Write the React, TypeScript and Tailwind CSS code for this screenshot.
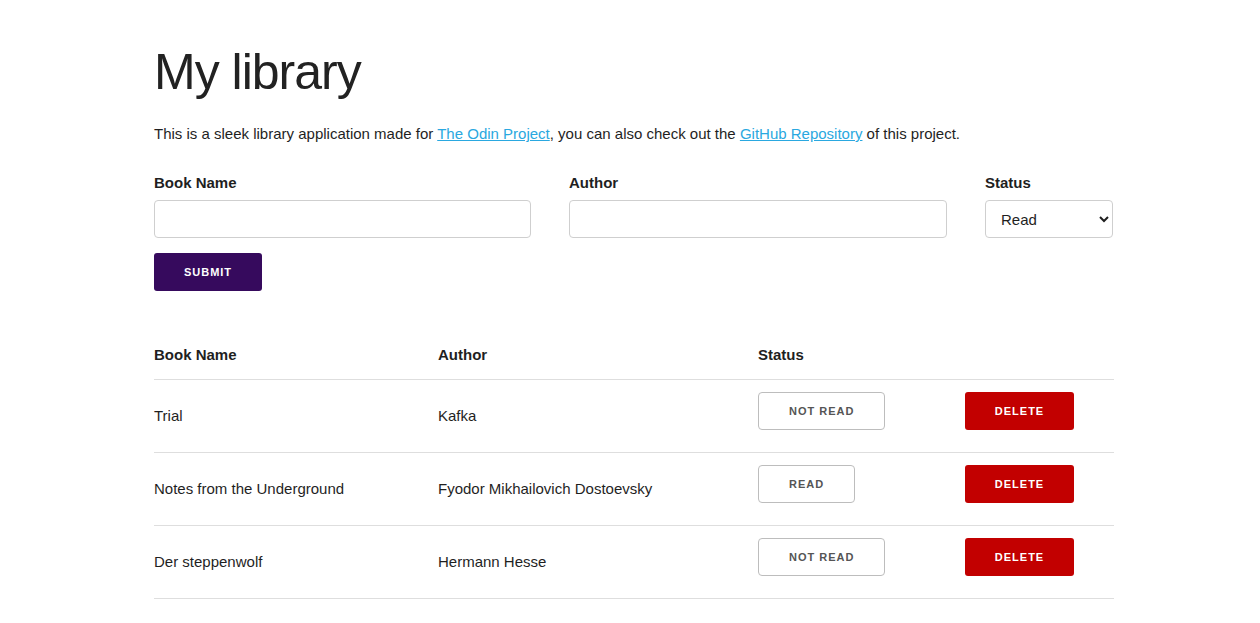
import React from "react";

const books = [
  { name: "Trial", author: "Kafka", status: "NOT READ" },
  { name: "Notes from the Underground", author: "Fyodor Mikhailovich Dostoevsky", status: "READ" },
  { name: "Der steppenwolf", author: "Hermann Hesse", status: "NOT READ" },
];

export default function App() {
  return (
    <div
      className="min-h-screen bg-white text-[#1f1f1f]"
      style={{ fontFamily: '"Liberation Sans", Arial, sans-serif' }}
    >
      <div className="mx-auto w-[968px] pl-2">
        <h1 className="pt-[40px] text-[50px] leading-[64px] tracking-[-1px] text-[#222222]">My library</h1>
        <p className="mt-[19px] text-[15px] leading-[22px]">
          This is a sleek library application made for{" "}
          <a href="#" className="text-[#2aa8e0] underline">The Odin Project</a>, you can also check out the{" "}
          <a href="#" className="text-[#2aa8e0] underline">GitHub Repository</a> of this project.
        </p>

        <form className="mt-[27px]">
          <div className="grid grid-cols-[415px_416px_128px]">
            <div className="flex flex-col">
              <label className="text-[15px] font-bold leading-[22px]">Book Name</label>
              <input className="mt-[6px] h-[38px] w-[377px] rounded-[4px] border border-[#cfcfcf] px-3 text-[15px]" />
            </div>
            <div className="flex flex-col">
              <label className="text-[15px] font-bold leading-[22px]">Author</label>
              <input className="mt-[6px] h-[38px] w-[378px] rounded-[4px] border border-[#cfcfcf] px-3 text-[15px]" />
            </div>
            <div className="flex flex-col">
              <label className="text-[15px] font-bold leading-[22px]">Status</label>
              <select className="mt-[6px] h-[38px] rounded-[4px] border border-[#cfcfcf] bg-white pl-[11px] pr-1 text-[15px] text-[#1f1f1f]">
                <option>Read</option>
                <option>Not Read</option>
              </select>
            </div>
          </div>
          <button
            type="button"
            className="mt-[15px] h-[38px] w-[108px] rounded-[3px] bg-[#360a5d] text-[11px] font-bold tracking-[1px] text-white"
          >
            SUBMIT
          </button>
        </form>

        <div className="mt-[53px] w-[960px]">
          <div className="grid h-[36px] grid-cols-[284px_320px_207px_1fr] items-start border-b border-[#dedede] text-[15px] font-bold leading-[22px]">
            <div>Book Name</div>
            <div>Author</div>
            <div>Status</div>
            <div></div>
          </div>
          {books.map((b) => (
            <div
              key={b.name}
              className="grid h-[73px] grid-cols-[284px_320px_207px_1fr] border-b border-[#dedede] text-[15px] leading-[22px]"
            >
              <div className="self-center">{b.name}</div>
              <div className="self-center">{b.author}</div>
              <div className="pt-[12px]">
                <button
                  type="button"
                  className="h-[38px] rounded-[4px] border border-[#bdbdbd] bg-white px-[30px] text-[11px] font-bold tracking-[1px] text-[#555555]"
                >
                  {b.status}
                </button>
              </div>
              <div className="pt-[12px]">
                <button
                  type="button"
                  className="h-[38px] w-[109px] rounded-[3px] bg-[#c20000] text-[11px] font-bold tracking-[1px] text-white"
                >
                  DELETE
                </button>
              </div>
            </div>
          ))}
        </div>
      </div>
    </div>
  );
}
